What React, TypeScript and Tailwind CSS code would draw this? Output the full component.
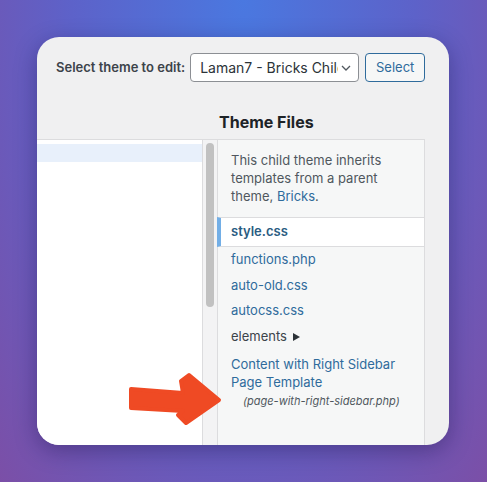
import React from 'react';

const files = ['functions.php', 'auto-old.css', 'autocss.css'];

function Arrow() {
  // red pointer drawn over the editor, in page coordinates
  return (
    <svg
      className="absolute left-[88px] top-[331px] w-[108px] h-[66px] pointer-events-none"
      viewBox="125 368 108 66"
    >
      <polygon
        points="131,389 183,393 181,381 189,375 219,400 186,423 178,415 183,411 131,408"
        fill="#ef4a24"
        stroke="#ef4a24"
        strokeWidth="4"
        strokeLinejoin="round"
      />
    </svg>
  );
}

export default function App() {
  return (
    <div
      className="w-full h-[482px] p-[37px] bg-[radial-gradient(ellipse_at_top,#4a78e0_0%,#5d62c9_50%,#7b4fa7_100%)]"
      style={{ fontFamily: 'Inter, "Noto Sans", sans-serif' }}
    >
      <div className="relative w-[412px] h-[408px] rounded-[22px] overflow-hidden bg-[#f0f0f1] flex flex-col shadow-[0_6px_22px_rgba(20,10,60,0.35)]">
        {/* theme picker */}
        <div className="flex items-center pt-[16px] pl-[19px]">
          <span className="text-[13px] font-semibold text-[#3c434a] mr-[5px]">Select theme to edit:</span>
          <div className="w-[169px] h-[29px] flex items-center bg-white border border-[#8c8f94] rounded-[4px] pl-[9px] pr-[7px]">
            <span className="flex-1 min-w-0 text-[14px] text-[#2c3338] whitespace-nowrap overflow-hidden">Laman7 - Bricks Child</span>
            <svg width="10" height="6" viewBox="0 0 10 6" className="ml-[3px] shrink-0">
              <path d="M1 1l4 4 4-4" fill="none" stroke="#50575e" strokeWidth="1.3" />
            </svg>
          </div>
          <button className="ml-[6px] w-[60px] h-[29px] bg-[#f6f7f7] border border-[#2f6b9c] rounded-[4px] text-[13px] text-[#2f6b9c]">
            Select
          </button>
        </div>

        {/* editor + file list */}
        <div className="flex-1 grid grid-cols-[180px_208px] grid-rows-[auto_1fr] mt-[29px]">
          <div />
          <h2 className="text-[16px] leading-[22px] font-bold text-[#1d2327] pl-[2px] mb-[6px]">Theme Files</h2>

          <div className="flex border-t border-[#dcdcde]">
            <div className="flex-1 bg-white pt-[4px]">
              <div className="h-[18px] bg-[#e8f0fb]" />
            </div>
            <div className="w-[15px] border-l border-[#dcdcde] bg-[#f3f3f4] pt-[3px] pl-[3px]">
              <div className="w-[8px] h-[164px] rounded-full bg-[#c1c1c1]" />
            </div>
          </div>

          <div className="border border-b-0 border-[#dcdcde] bg-[#f6f7f7] pt-[11px]">
            <p className="px-[13px] text-[13px] leading-[18px] text-[#50575e]">
              This child theme inherits templates from a parent theme, <span className="text-[#2f6b9c]">Bricks</span>.
            </p>
            <div className="mt-[12px] -ml-px -mr-px h-[30px] flex items-center bg-white border-y border-r border-[#dcdcde] border-l-4 border-l-[#72aee6] pl-[10px]">
              <span className="text-[13px] font-semibold text-[#2a5c82]">style.css</span>
            </div>
            {files.map((f) => (
              <div key={f} className="h-[25.5px] flex items-center px-[13px] text-[13px] text-[#2f6b9c]">
                {f}
              </div>
            ))}
            <div className="h-[26px] flex items-center px-[13px] text-[13px] text-[#3c434a]">
              elements
              <svg width="7" height="8" viewBox="0 0 7 8" className="ml-[6px]">
                <path d="M0 0l7 4-7 4z" fill="#2c3338" />
              </svg>
            </div>
            <div className="mt-[5px] px-[13px] text-[13px] leading-[18px] text-[#2f6b9c]">
              Content with Right Sidebar
              <br />
              Page Template
            </div>
            <div className="mt-[2px] pl-[25px] text-[11px] leading-[16px] italic text-[#50575e]">
              (page-with-right-sidebar.php)
            </div>
          </div>
        </div>

        <Arrow />
      </div>
    </div>
  );
}
